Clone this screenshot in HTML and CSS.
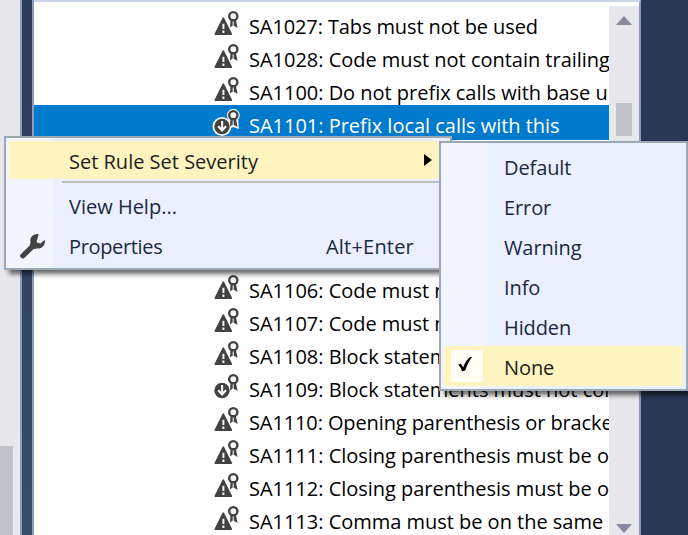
FILE: index.html
```html
<!DOCTYPE html>
<html lang="en">
<head>
<meta charset="utf-8">
<title>Rule set</title>
<link rel="stylesheet" href="styles.css">
</head>
<body>
<svg class="defs" width="0" height="0">
  <defs>
    <g id="ribbon"><path d="M17.6 9.5 L17 17.5 L20 15.2 L24.6 18 L22.8 9.5Z" fill="#424242"/><path d="M20.2 11v4.6" stroke="#fff" stroke-width="1"/><circle cx="20.3" cy="6.2" r="4.1" fill="#f5f5f5" stroke="#424242" stroke-width="2.4"/></g>
    <g id="warn"><path d="M10.3 8.2 L2.3 24.2 H18.3Z" fill="#424242" stroke="#424242" stroke-width="1.6" stroke-linejoin="round"/><path d="M10.4 13.8v5.2M10.4 20.6v2.4" stroke="#f4f4f4" stroke-width="2"/></g>
    <g id="down"><circle cx="9" cy="17.5" r="7.7" fill="#424242"/><path d="M9.1 12v9M5.2 17.3l3.9 4.2 3.9-4.2" fill="none" stroke="#f6f6f6" stroke-width="2.2"/></g>
  </defs>
</svg>
<main class="screen">
  <div class="left-scroll"><div class="left-thumb"></div></div>
  <div class="splitter"></div>
  <section class="panel">
    <div class="rules">
      <div class="row tight"><svg class="icon"><use href="#warn"/><use href="#ribbon"/></svg><span>SA1027: Tabs must not be used</span></div>
      <div class="row"><svg class="icon"><use href="#warn"/><use href="#ribbon"/></svg><span>SA1028: Code must not contain trailing</span></div>
      <div class="row"><svg class="icon"><use href="#warn"/><use href="#ribbon"/></svg><span>SA1100: Do not prefix calls with base u</span></div>
      <div class="row selected"><svg class="icon"><circle cx="9" cy="17.5" r="9.5" fill="#f6f6f6"/><circle cx="20.3" cy="6.2" r="6.4" fill="#f6f6f6"/><path d="M16 9v10h3l1-1 6 2-1-11z" fill="#f6f6f6"/><use href="#down"/><use href="#ribbon"/></svg><span>SA1101: Prefix local calls with this</span></div>
      <div class="row after-menu"><svg class="icon"><use href="#warn"/><use href="#ribbon"/></svg><span>SA1106: Code must not</span></div>
      <div class="row"><svg class="icon"><use href="#warn"/><use href="#ribbon"/></svg><span>SA1107: Code must not</span></div>
      <div class="row"><svg class="icon"><use href="#warn"/><use href="#ribbon"/></svg><span>SA1108: Block statements</span></div>
      <div class="row"><svg class="icon"><use href="#down"/><use href="#ribbon"/></svg><span>SA1109: Block statements must not con</span></div>
      <div class="row tight"><svg class="icon"><use href="#warn"/><use href="#ribbon"/></svg><span>SA1110: Opening parenthesis or bracke</span></div>
      <div class="row"><svg class="icon"><use href="#warn"/><use href="#ribbon"/></svg><span>SA1111: Closing parenthesis must be o</span></div>
      <div class="row"><svg class="icon"><use href="#warn"/><use href="#ribbon"/></svg><span>SA1112: Closing parenthesis must be o</span></div>
      <div class="row"><svg class="icon"><use href="#warn"/><use href="#ribbon"/></svg><span>SA1113: Comma must be on the same</span></div>
    </div>
    <div class="scrollbar"><i class="arrow up"></i><i class="thumb"></i><i class="arrow down"></i></div>
  </section>
  <div class="backdrop"></div>

  <div class="menu context">
    <div class="item hot"><span>Set Rule Set Severity</span><i class="submenu-arrow"></i></div>
    <div class="separator"></div>
    <div class="item"><span>View Help...</span></div>
    <div class="item"><svg class="wrench" viewBox="0 0 26 26"><path d="M2.8 22.8 L13.6 12.4" stroke="#424242" stroke-width="5.2" stroke-linecap="round"/><path d="M18.7 1.2 C13.4 .2 9.4 4.4 10.5 9.2 L10 12 L14 16 L17.2 15.4 C22 16.3 26 11.6 24.7 6.8 L20.5 10.4 L16.5 9.3 L18.7 1.2Z" fill="#424242"/></svg><span class="properties">Properties</span><span class="shortcut">Alt+Enter</span></div>
  </div>

  <div class="menu severity">
    <div class="item"><span>Default</span></div>
    <div class="item"><span>Error</span></div>
    <div class="item"><span>Warning</span></div>
    <div class="item"><span>Info</span></div>
    <div class="item"><span>Hidden</span></div>
    <div class="item hot"><div class="check"><svg width="16" height="17" viewBox="0 0 16 17"><path d="M1 8.8 L4 7.8 L6.2 11.2 C8 6.5 10.2 3 13.2 1 L15 1 C11.8 5 9.7 9.8 8.2 14.5 L5 15.2 C4.2 12.6 3 10.4 1 8.8Z" fill="#000"/></svg></div><span>None</span></div>
  </div>
</main>
</body>
</html>
```

FILE: styles.css
```css
* { box-sizing: border-box; }
body { margin: 0; overflow: hidden; font: 20px/33px "Open Sans", "Noto Sans", sans-serif; color: #000; }
.defs { position: absolute; }
.screen { position: relative; display: flex; width: 688px; height: 535px; overflow: hidden; }
.left-scroll { width: 20px; background: #e8e8ec; padding-top: 446px; }
.left-thumb { width: 13px; height: 89px; background: #c2c3c9; }
.splitter { width: 14px; border: solid #8e9bbc; border-width: 0 2px; background: linear-gradient(#2c3c5b, #364c6b); }
.panel { width: 607px; display: flex; border-top: 2px solid #ccd5e6; border-right: 2px solid #8e9bbc; background: #fff; }
.rules { width: 575px; padding-top: 4px; overflow: hidden; }
.row { display: flex; height: 33px; padding-left: 179px; white-space: nowrap; }
.row span { padding-top: 4px; letter-spacing: -.02px; }
.row.tight span { letter-spacing: -.11px; }
.icon { flex: none; width: 28px; height: 28px; margin: 4px 7.8px 0 .2px; overflow: visible; }
.selected { height: 35px; margin-bottom: -2px; background: #007acc; color: #fff; }
.after-menu { margin-top: 132px; }
.scrollbar { width: 30px; margin-top: 4px; background: #e8e8ec; display: flex; flex-direction: column; align-items: center; }
.arrow { border: solid transparent; border-width: 0 8px; }
.arrow.up { border-bottom: 9px solid #868999; margin-top: 10px; }
.thumb { width: 16px; height: 33px; margin-top: 78px; background: #c2c3c9; }
.arrow.down { border-top: 9px solid #868999; margin-top: auto; margin-bottom: 2px; }
.backdrop { flex: 1; background: #293955; }
.menu { position: absolute; border: 2px solid #9ba7b7; color: #1b293e; box-shadow: 4px 5px 5px -1px rgba(0,0,0,.6); }
.item { position: relative; display: flex; height: 40px; line-height: 40px; white-space: nowrap; letter-spacing: -.1px; }
.hot { background: #fdf4bf; color: #1e1e1e; }
.context { left: 4px; top: 136px; width: 448px; height: 134px; padding: 3px; background: linear-gradient(90deg, #f2f4fe 47px, #eaf0ff 47px); }
.context .item { padding-left: 60px; letter-spacing: 0; }
.context .properties { letter-spacing: -.35px; }
.context .hot { height: 38px; line-height: 41px; }
.separator { height: 2px; margin: 2px 8px 4px 53px; background: #bebec8; }
.submenu-arrow { position: absolute; left: 415px; top: 13px; border: solid transparent; border-width: 6px 0; border-left: 8px solid #000; }
.wrench { position: absolute; left: 11px; top: 6px; width: 26px; height: 26px; }
.shortcut { margin-left: auto; margin-right: 33px; letter-spacing: .2px; }
.severity { left: 439px; top: 141px; width: 249px; height: 250px; padding: 5px 3px; background: linear-gradient(90deg, #f2f4fe 47px, #eaf0ff 47px); }
.severity .item { padding-left: 60px; }
.severity .hot { margin-top: -2px; line-height: 43px; }
.check { position: absolute; left: 7px; top: 4px; width: 32px; height: 32px; background: #fffcf4; display: flex; align-items: center; justify-content: center; }
.check svg { margin: -3px 4px 0 0; }
```
